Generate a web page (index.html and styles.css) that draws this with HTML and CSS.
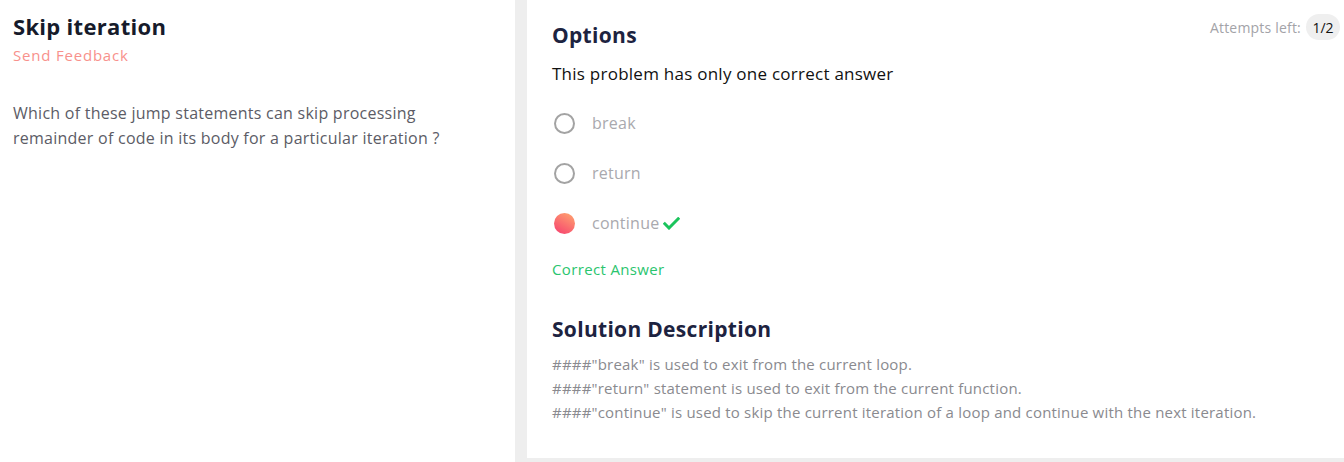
FILE: index.html
```html
<!DOCTYPE html>
<html>
<head>
<meta charset="utf-8">
<link rel="stylesheet" href="styles.css">
</head>
<body>
<div class="page">
  <section class="question">
    <h1 class="q-title">Skip iteration</h1>
    <a class="feedback">Send Feedback</a>
    <p class="q-text">Which of these jump statements can skip processing remainder of code in its body for a particular iteration ?</p>
  </section>
  <div class="answer-wrap">
    <section class="answer">
      <div class="attempts"><span class="attempts-label">Attempts left:</span><span class="badge">1/2</span></div>
      <h2 class="heading">Options</h2>
      <p class="hint">This problem has only one correct answer</p>
      <ul class="options">
        <li class="option"><span class="radio"></span><span class="opt-text">break</span></li>
        <li class="option"><span class="radio"></span><span class="opt-text">return</span></li>
        <li class="option"><span class="radio selected"></span><span class="opt-text">continue</span>
          <svg class="check" width="17" height="13" viewBox="0 0 17 13"><path d="M1.8 6.8 L6 11 L15.2 1.8" fill="none" stroke="#1bc45c" stroke-width="3" stroke-linecap="square"/></svg>
        </li>
      </ul>
      <div class="correct">Correct Answer</div>
      <h2 class="heading solution-heading">Solution Description</h2>
      <div class="solution">
        <p>####"break" is used to exit from the current loop.</p>
        <p>####"return" statement is used to exit from the current function.</p>
        <p>####"continue" is used to skip the current iteration of a loop and continue with the next iteration.</p>
      </div>
    </section>
  </div>
</div>
</body>
</html>
```
FILE: styles.css
```css
* { box-sizing: border-box; }
html, body { margin: 0; padding: 0; background: #fff; }
body { font-family: "Open Sans", "Lato", sans-serif; }
.page { display: flex; height: 462px; overflow: hidden; }
.question { width: 515px; flex: none; padding: 11px 13px; background: #fff; }
.q-title { margin: 0; font-size: 22px; font-weight: 700; color: #161b2b; line-height: 30px; letter-spacing: 0.3px; }
.feedback { display: block; margin-top: 4px; font-size: 15px; color: #f8918c; letter-spacing: 0.8px; line-height: 20px; }
.q-text { margin: 36px 0 0; max-width: 460px; font-size: 16px; line-height: 25px; color: #5c5c66; letter-spacing: 0.25px; }
.answer-wrap { flex: 1; background: #eeeeee; padding-left: 12px; padding-bottom: 4px; }
.answer { position: relative; height: 100%; background: #fff; padding: 20px 25px; }
.attempts { position: absolute; top: 14px; right: 4px; display: flex; align-items: center; gap: 5px; font-size: 14px; }
.attempts-label { color: #a3a3a8; letter-spacing: 0.2px; }
.badge { background: #efefef; color: #111; width: 34px; height: 26px; display: flex; align-items: center; justify-content: center; border-radius: 13px; }
.heading { margin: 0; font-size: 21px; font-weight: 700; color: #1d2340; line-height: 30px; letter-spacing: 0.3px; }
.hint { margin: 13px 0 0; font-size: 17px; color: #111; line-height: 22px; letter-spacing: 0.25px; }
.options { list-style: none; margin: 13px 0 0; padding: 0; }
.option { display: flex; align-items: center; height: 50px; }
.radio { width: 21px; height: 21px; border-radius: 50%; border: 2px solid #a3a3a3; margin-left: 2px; flex: none; }
.radio.selected { border: none; background: linear-gradient(30deg, #f63d6f 0%, #ffa86f 100%); }
.opt-text { margin-left: 17px; font-size: 16px; color: #a9a9ae; letter-spacing: 0.25px; }
.check { margin-left: 4px; }
.correct { margin-top: 11px; font-size: 15px; color: #2ac56e; line-height: 20px; letter-spacing: 0.35px; }
.solution-heading { margin-top: 35px; }
.solution { margin-top: 8px; }
.solution p { margin: 0; font-size: 15px; line-height: 24px; color: #8a8a8f; letter-spacing: 0.2px; }
```
